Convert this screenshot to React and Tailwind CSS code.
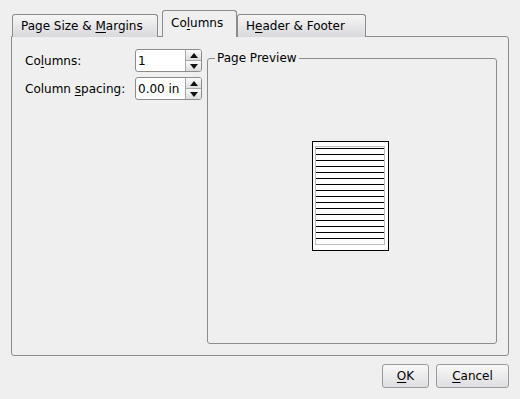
import React from "react"

function Spin({ value }) {
  return (
    <div className="flex h-[23px] w-[67px] rounded-[3px] border border-[#8c8c8c] bg-white overflow-hidden">
      <div className="flex-1 flex items-center pl-[2px] text-[12px] leading-none">{value}</div>
      <div className="flex w-[16px] flex-col border-l border-[#a8a8a8]">
        <div className="flex flex-1 items-center justify-center border-b border-[#a8a8a8] bg-gradient-to-b from-[#fbfbfb] to-[#dcdcdf]">
          <svg width="8" height="5" viewBox="0 0 8 5"><path d="M0 5 L4 0 L8 5 Z" fill="#111" /></svg>
        </div>
        <div className="flex flex-1 items-center justify-center bg-gradient-to-b from-[#fbfbfb] to-[#dcdcdf]">
          <svg width="8" height="5" viewBox="0 0 8 5"><path d="M0 0 L4 5 L8 0 Z" fill="#111" /></svg>
        </div>
      </div>
    </div>
  )
}

function Btn({ children, w }) {
  return (
    <button className={`flex h-[24px] ${w} items-center justify-center rounded-[3px] border border-[#9a9a9a] bg-gradient-to-b from-[#f8f8f8] to-[#dedee2] text-[12px] text-black`}>
      <span>{children}</span>
    </button>
  )
}

export default function App() {
  return (
    <div
      className="h-[399px] w-[520px] overflow-hidden bg-[#efefef] text-black"
      style={{ fontFamily: '"DejaVu Sans", sans-serif' }}
    >
      <div className="pl-[11px] pt-[10px]">
        {/* tabs */}
        <div className="relative z-10 flex h-[27px] items-end">
          <div className="ml-[1px] flex h-[23px] w-[146px] items-center rounded-t-[3px] border border-b-0 border-[#8c8c8c] bg-gradient-to-b from-[#f6f6f6] to-[#d9d9dd] pl-[8px] text-[12px]">
            <span>Page Size &amp; <span className="underline underline-offset-2">M</span>argins</span>
          </div>
          <div className="ml-[4px] flex h-[27px] w-[75px] items-center rounded-t-[3px] border border-b-0 border-[#8c8c8c] bg-[#efefef] pb-[3px] pl-[8px] text-[12px]">
            <span>Co<span className="underline underline-offset-2">l</span>umns</span>
          </div>
          <div className="flex h-[23px] w-[129px] items-center rounded-t-[3px] border border-b-0 border-[#8c8c8c] bg-gradient-to-b from-[#f6f6f6] to-[#d9d9dd] pl-[8px] text-[12px]">
            <span>H<span className="underline underline-offset-2">e</span>ader &amp; Footer</span>
          </div>
        </div>
        {/* pane */}
        <div className="-mt-px flex h-[320px] w-[498px] rounded-b-[3px] rounded-tr-[3px] border border-[#8c8c8c] pl-[13px] pt-[12px]">
          <div className="flex w-[182px] flex-col gap-[5px]">
            <div className="flex items-center">
              <span className="w-[110px] text-[12px]">Co<span className="underline underline-offset-2">l</span>umns:</span>
              <Spin value="1" />
            </div>
            <div className="flex items-center">
              <span className="w-[110px] text-[12px]">Column <span className="underline underline-offset-2">s</span>pacing:</span>
              <Spin value="0.00 in" />
            </div>
          </div>
          <fieldset className="mt-[2px] flex h-[293px] w-[290px] items-center justify-center rounded-[3px] border border-[#8c8c8c] pb-[16px] pr-[3px]">
            <legend className="ml-[7px] px-[2px] text-[12px] leading-[14px]">Page Preview</legend>
            <div className="h-[110px] w-[77px] border border-black bg-white pl-[2px] pr-[3px] pt-[4px]">
              <div className="flex h-[99px] flex-col gap-[5px] border border-[#bdbdbd] pt-[1px]">
                {Array.from({ length: 16 }).map((_, i) => (
                  <div key={i} className="h-px bg-black" />
                ))}
              </div>
            </div>
          </fieldset>
        </div>
      </div>
      {/* buttons */}
      <div className="mt-[8px] flex justify-end gap-[7px] pr-[11px]">
        <Btn w="w-[47px]"><span className="underline underline-offset-2">O</span>K</Btn>
        <Btn w="w-[73px]"><span className="underline underline-offset-2">C</span>ancel</Btn>
      </div>
    </div>
  )
}
